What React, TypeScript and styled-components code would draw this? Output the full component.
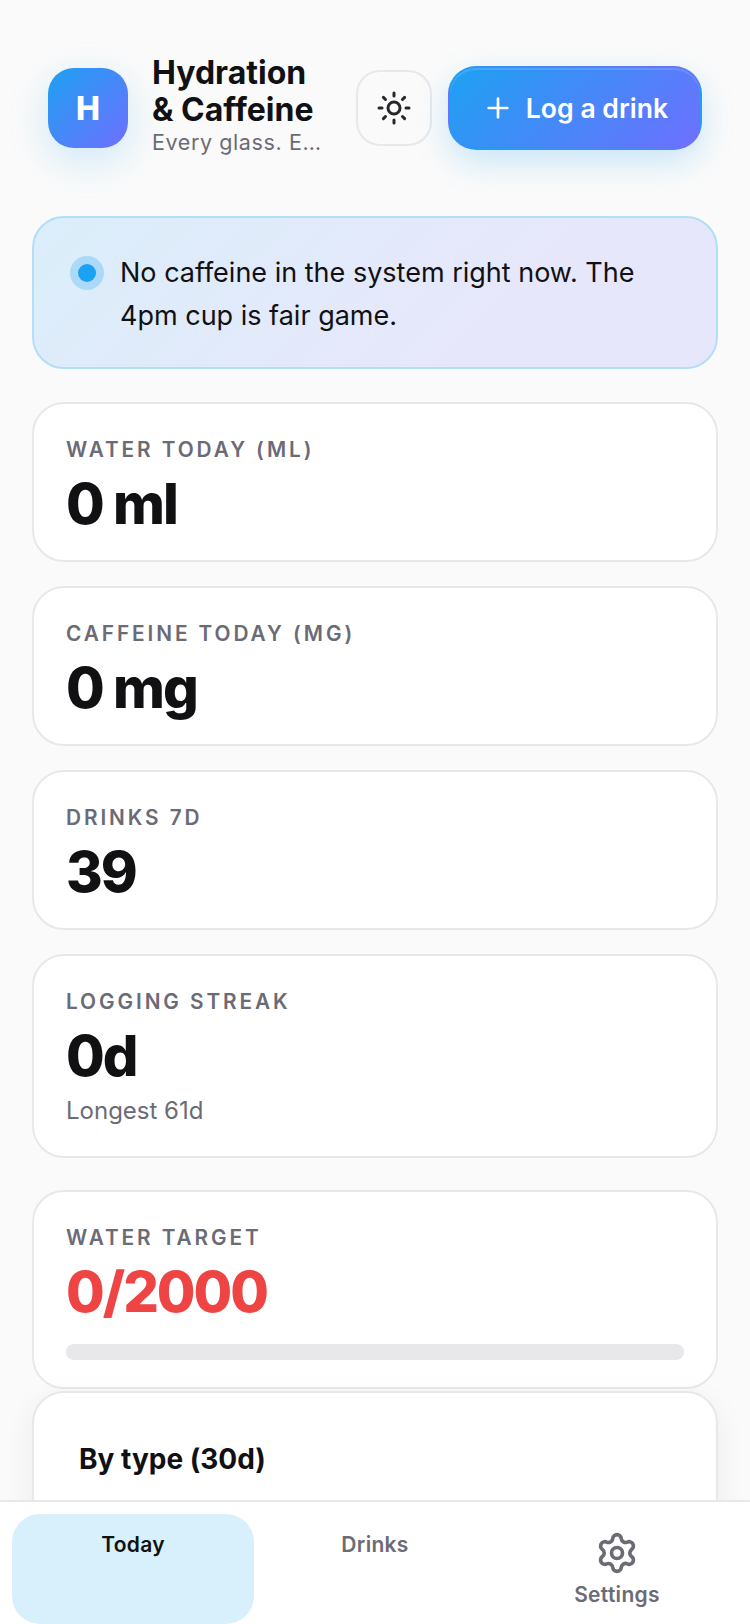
import React from "react";
import styled, { createGlobalStyle } from "styled-components";
import { Plus, Settings, Sun } from "lucide-react";

const GlobalStyle = createGlobalStyle`
  * { box-sizing: border-box; }
  html, body { margin: 0; height: 100%; overflow: hidden; }
  body {
    background: #fafafa;
    color: #111113;
    font-family: Inter, "Noto Sans", sans-serif;
  }
`;

const Page = styled.div`
  height: 1624px;
  overflow: hidden;
  padding-top: 66px;
`;

const Header = styled.header`
  display: flex;
  align-items: center;
  gap: 16px;
  padding: 0 48px;
  height: 84px;
`;

const Brand = styled.div`
  display: flex;
  align-items: center;
  gap: 24px;
  flex: 1;
  min-width: 0;
  padding-right: 16px;
`;

const Logo = styled.div`
  flex: none;
  width: 80px;
  height: 80px;
  display: flex;
  align-items: center;
  justify-content: center;
  border-radius: 26px;
  background: linear-gradient(135deg, #1da1f2, #6f6fff);
  box-shadow: 0 12px 40px rgba(29, 161, 242, 0.2);
  color: #fff;
  font-size: 32px;
  font-weight: 800;
`;

const BrandText = styled.div`
  min-width: 0;
  flex: 1;
`;

const Title = styled.h1`
  margin: 0;
  font-size: 32px;
  line-height: 37px;
  font-weight: 700;
  color: #111113;
`;

const Tagline = styled.div`
  margin: 1px 0 7px;
  font-size: 21.5px;
  line-height: 26px;
  color: #6b6b76;
  letter-spacing: 0.6px;
  white-space: nowrap;
  overflow: hidden;
  text-overflow: ellipsis;
`;

const ThemeButton = styled.button`
  flex: none;
  width: 76px;
  height: 76px;
  display: flex;
  align-items: center;
  justify-content: center;
  padding: 0;
  background: transparent;
  border: 2px solid #e8e8ea;
  border-radius: 24px;
  color: #26262b;
`;

const LogButton = styled.button`
  flex: none;
  width: 254px;
  height: 84px;
  display: flex;
  align-items: center;
  justify-content: center;
  gap: 12px;
  padding: 0;
  border: 2px solid transparent;
  border-radius: 28px;
  background: linear-gradient(135deg, #1da1f2, #6f6fff);
  box-shadow: 0 12px 32px rgba(29, 161, 242, 0.22), inset 0 2px 0 rgba(255, 255, 255, 0.14);
  color: #fff;
  font-family: inherit;
  font-size: 26.6px;
  font-weight: 600;
`;

const Alert = styled.div`
  display: flex;
  align-items: flex-start;
  gap: 16px;
  margin: 66px 32px 33px;
  padding: 33px 40px 33px 36px;
  height: 153px;
  border: 2px solid #b3def7;
  border-radius: 32px;
  background: linear-gradient(135deg, #dbeefa, #e7e7fb 70%);
  font-size: 27px;
  line-height: 43px;
  color: #111113;
`;

const Dot = styled.span`
  flex: none;
  width: 18px;
  height: 18px;
  margin: 13px 8px 0;
  border-radius: 50%;
  background: #1da1f2;
  box-shadow: 0 0 0 8px rgba(29, 161, 242, 0.25);
`;

const Stats = styled.div`
  display: grid;
  gap: 24px;
  margin: 0 32px;
`;

const Card = styled.section`
  padding: 32px 32px 22px;
  background: #fff;
  border: 2px solid #e8e8ea;
  border-radius: 32px;
`;

const Label = styled.div`
  font-size: 20.8px;
  line-height: 28px;
  font-weight: 600;
  letter-spacing: 0.14em;
  text-transform: uppercase;
  color: #6b6b76;
`;

const Value = styled.div<{ $danger?: boolean }>`
  margin-top: 6px;
  font-size: 56px;
  line-height: 68px;
  font-weight: 800;
  letter-spacing: -2px;
  color: ${(p) => (p.$danger ? "#ef4444" : "#111113")};
`;

const Hint = styled.div`
  margin: 5px 0 7px;
  font-size: 24px;
  line-height: 32px;
  color: #6b6b76;
`;

const Track = styled.div`
  margin-top: 18px;
  height: 16px;
  border-radius: 8px;
  background: #e8e8ea;
`;

const TargetCard = styled(Card)`
  margin: 32px 32px 0;
  height: 199px;
`;

const ChartCard = styled(Card)`
  margin: 2px 32px 0;
  padding: 48px 45px;
  min-height: 320px;
  box-shadow: 0 8px 32px rgba(17, 17, 19, 0.06);
`;

const ChartTitle = styled.h2`
  margin: 0;
  font-size: 28px;
  line-height: 36px;
  font-weight: 700;
  color: #111113;
`;

const Nav = styled.nav`
  position: fixed;
  left: 0;
  right: 0;
  bottom: 0;
  height: 124px;
  display: grid;
  grid-template-columns: repeat(3, 1fr);
  padding: 12px 12px 0;
  background: #fff;
  border-top: 2px solid #e8e8ea;
`;

const Tab = styled.a<{ $active?: boolean }>`
  display: flex;
  flex-direction: column;
  align-items: center;
  gap: 6px;
  padding-top: 17px;
  border-radius: 28px;
  background: ${(p) => (p.$active ? "#d8f0fb" : "transparent")};
  color: ${(p) => (p.$active ? "#111113" : "#6b6b76")};
  font-size: 21px;
  line-height: 28px;
  font-weight: 600;
  letter-spacing: 0.3px;
`;

export default function App() {
  return (
    <Page>
      <GlobalStyle />
      <Header>
        <Brand>
          <Logo>H</Logo>
          <BrandText>
            <Title>Hydration &amp; Caffeine</Title>
            <Tagline>Every glass. Every cup.</Tagline>
          </BrandText>
        </Brand>
        <ThemeButton aria-label="Toggle theme">
          <Sun size={36} strokeWidth={2} />
        </ThemeButton>
        <LogButton>
          <Plus size={32} strokeWidth={2} />
          Log a drink
        </LogButton>
      </Header>

      <Alert>
        <Dot />
        <span>No caffeine in the system right now. The 4pm cup is fair game.</span>
      </Alert>

      <Stats>
        <Card>
          <Label>Water today (ml)</Label>
          <Value>0 ml</Value>
        </Card>
        <Card>
          <Label>Caffeine today (mg)</Label>
          <Value>0 mg</Value>
        </Card>
        <Card>
          <Label>Drinks 7d</Label>
          <Value>39</Value>
        </Card>
        <Card>
          <Label>Logging streak</Label>
          <Value>0d</Value>
          <Hint>Longest 61d</Hint>
        </Card>
      </Stats>

      <TargetCard>
        <Label>Water target</Label>
        <Value $danger>0/2000</Value>
        <Track />
      </TargetCard>

      <ChartCard>
        <ChartTitle>By type (30d)</ChartTitle>
      </ChartCard>

      <Nav>
        <Tab $active>Today</Tab>
        <Tab>Drinks</Tab>
        <Tab>
          <Settings size={44} strokeWidth={2} />
          Settings
        </Tab>
      </Nav>
    </Page>
  );
}
